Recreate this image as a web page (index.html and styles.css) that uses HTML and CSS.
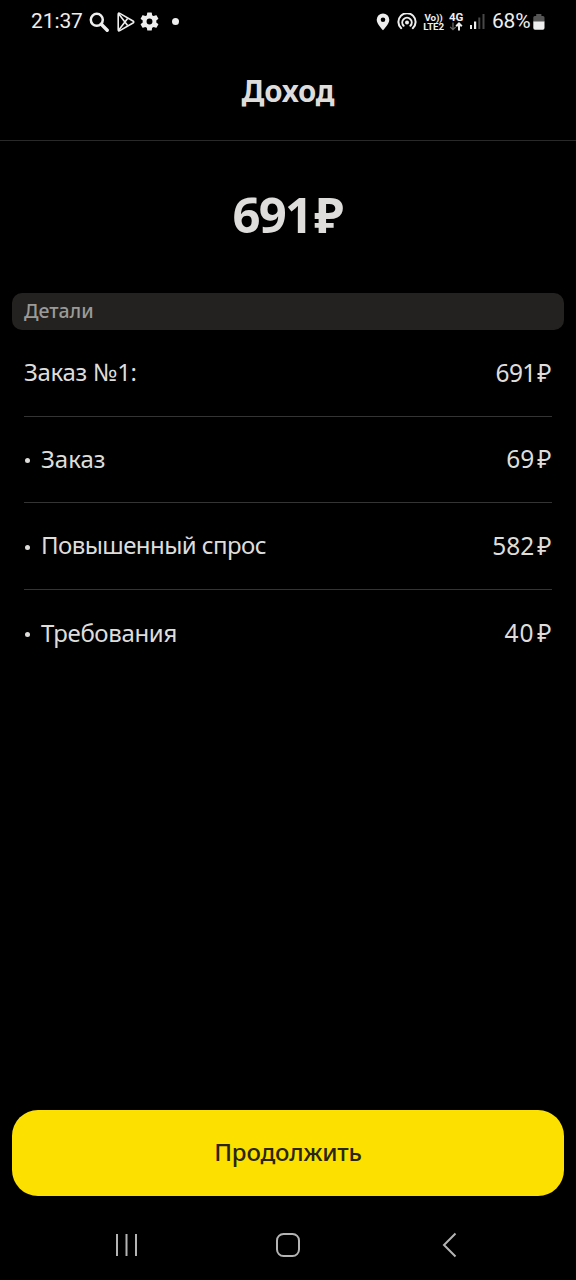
FILE: index.html
```html
<!DOCTYPE html>
<html lang="ru">
<head>
<meta charset="utf-8">
<title>Доход</title>
<link rel="stylesheet" href="styles.css">
</head>
<body>
<div class="screen">
  <div class="status">
    <span class="clock">21:37</span>
    <svg class="ic-search" width="20" height="20" viewBox="0 0 20 20"><circle cx="7.8" cy="7.8" r="6" fill="none" stroke="#eee" stroke-width="2.5"/><path d="M12.3 12.3L18.2 18.2" stroke="#eee" stroke-width="3.4" stroke-linecap="round"/></svg>
    <svg class="ic-play" width="18" height="20" viewBox="0 0 18 20" fill="none" stroke="#eee" stroke-width="1.6" stroke-linejoin="round"><path d="M1.2 2.4Q1.2 .6 2.8 1.4L16 9Q17.5 10 16 11L2.8 18.6Q1.2 19.4 1.2 17.6Z"/><path d="M1.8 2L10.6 13.600M1.8 18L10.6 6.400"/></svg>
    <svg class="ic-gear" width="19" height="19" viewBox="2.4 2 19.2 20"><path fill="#eee" d="M19.14 12.94c.04-.3.06-.61.06-.94s-.02-.64-.07-.94l2.03-1.58a.49.49 0 0 0 .12-.61l-1.92-3.32a.49.49 0 0 0-.59-.22l-2.39.96a7 7 0 0 0-1.62-.94l-.36-2.54a.48.48 0 0 0-.48-.41h-3.84a.48.48 0 0 0-.47.41l-.36 2.54c-.59.24-1.13.57-1.62.94l-2.39-.96a.48.48 0 0 0-.59.22L2.74 8.87a.48.48 0 0 0 .12.61l2.03 1.58a6 6 0 0 0-.02 1.88l-2.03 1.58a.49.49 0 0 0-.12.61l1.92 3.32c.12.22.37.29.59.22l2.39-.96c.5.38 1.03.7 1.62.94l.36 2.54c.05.24.24.41.48.41h3.84c.24 0 .44-.17.47-.41l.36-2.54c.59-.24 1.13-.56 1.62-.94l2.39.96c.22.08.47 0 .59-.22l1.92-3.32a.48.48 0 0 0-.12-.61zM12 15.1a3.1 3.1 0 1 1 0-6.2 3.1 3.1 0 0 1 0 6.2z"/></svg>
    <span class="dot"></span>
    <svg class="ic-pin" width="14" height="18" viewBox="0 0 14 18"><path fill="#eee" fill-rule="evenodd" d="M7 .5a6.3 6.3 0 0 0-6.3 6.3C.7 11 7 17.3 7 17.3s6.3-6.3 6.3-10.5A6.3 6.3 0 0 0 7 .5zM7 4.4a2.3 2.3 0 1 1 0 4.6 2.3 2.3 0 0 1 0-4.6z"/></svg>
    <svg class="ic-hotspot" width="20" height="18" viewBox="0 0 20 18" fill="none" stroke="#eee" stroke-width="2" stroke-linecap="round"><path d="M4.2 15.2A8.6 8.6 0 1 1 15.8 15.200M6.600 12.700A4.700 4.700 0 1 1 13.400 12.700"/><circle cx="10" cy="9.500" r="2" fill="#eee" stroke="none"/></svg>
    <span class="volte"><span>Vo))</span><span>LTE2</span></span>
    <span class="net"><span>4G</span><svg width="14" height="9" viewBox="0 0 14 9" fill="none" stroke-width="1.3"><path stroke="#666" d="M4 .5V7.600M1.200 4.900L4 7.700L6.800 4.900"/><path stroke="#eee" stroke-width="2" d="M10 8.500V1.500M7.200 4.300L10 1.500L12.800 4.300"/></svg></span>
    <svg class="ic-signal" width="16" height="17" viewBox="0 0 16 17"><path fill="#eee" d="M0 12h2v4H0zM4 8.500h2.200V16H4z"/><path fill="#484848" d="M8.300 4.500h2V16h-2zM12.500 1h2v15h-2z"/></svg>
    <span class="percent">68%</span>
    <svg class="ic-battery" width="12" height="18" viewBox="0 0 12 18"><path fill="#555" d="M3.200 1h5.200v2h1.600q1.500 0 1.500 1.500V9H.3V4.500Q.3 3 1.800 3h1.400z"/><path fill="#eee" d="M.3 8.500h11.200V15q0 1.700-1.700 1.700H2Q.3 16.700.3 15z"/></svg>
  </div>
  <header class="header"><h1 class="title">Доход</h1></header>
  <main class="content">
    <div class="total"><span class="total-num">691</span><span>₽</span></div>
    <div class="section">Детали</div>
    <div class="list">
      <div class="row"><span class="order">Заказ №1:</span><span class="sum tight">691<i>₽</i></span></div>
      <div class="row"><span class="item">Заказ</span><span class="sum">69<i>₽</i></span></div>
      <div class="row"><span class="item demand">Повышенный спрос</span><span class="sum">582<i>₽</i></span></div>
      <div class="row"><span class="item extras">Требования</span><span class="sum wide">40<i>₽</i></span></div>
    </div>
  </main>
  <button class="continue">Продолжить</button>
  <nav class="nav">
    <svg width="26" height="26" viewBox="0 0 26 26"><path d="M3 2v22M12.500 2v22M22 2v22" stroke="#b4b4b4" stroke-width="2"/></svg>
    <svg width="26" height="26" viewBox="0 0 26 26"><rect x="2" y="2" width="22" height="22" rx="6.500" fill="none" stroke="#b4b4b4" stroke-width="2"/></svg>
    <svg width="26" height="26" viewBox="0 0 26 26"><path d="M18.500 1.500L7 13L18.500 24.500" fill="none" stroke="#b4b4b4" stroke-width="2"/></svg>
  </nav>
</div>
</body>
</html>
```
FILE: styles.css
```css
* { box-sizing: border-box; }
body { margin: 0; background: #000; color: #dedddb; font-family: "Noto Sans", sans-serif; }
svg { display: block; flex: none; }
.screen { width: 576px; height: 1280px; display: flex; flex-direction: column; background: #000; overflow: hidden; }
.status { height: 43px; flex: none; display: flex; align-items: center; padding: 0 30px 0 31px; color: #eee; font-family: Roboto, sans-serif; white-space: nowrap; }
.clock { width: 52px; font-size: 21px; letter-spacing: -.1px; padding-bottom: 1px; }
.ic-search { margin-left: 6px; }
.ic-play { margin-left: 8px; }
.ic-gear { margin-left: 5px; }
.dot { width: 7px; height: 7px; border-radius: 50%; background: #eee; margin-left: 13px; }
.ic-pin { margin-left: auto; }
.ic-hotspot { margin-left: 7px; }
.volte { display: flex; flex-direction: column; align-items: center; width: 23px; margin-left: 5px; font-size: 9.8px; line-height: 9px; font-weight: 700; letter-spacing: -.2px; }
.net { display: flex; flex-direction: column; align-items: center; width: 14px; margin-left: 4px; font-size: 11.5px; line-height: 9px; font-weight: 700; letter-spacing: -.3px; }
.ic-signal { margin-left: 7px; }
.percent { width: 39px; margin-left: 6px; font-size: 21px; letter-spacing: -.2px; padding-bottom: 1px; }
.ic-battery { margin-left: 2px; margin-right: 1px; }
.header { height: 98px; flex: none; display: flex; align-items: center; justify-content: center; padding-bottom: 1px; border-bottom: 1px solid #292929; }
.title { margin: 0; font-size: 29.5px; line-height: 40px; font-weight: 700; letter-spacing: -.2px; }
.content { flex: 1; padding: 0 12px; }
.total { height: 152px; padding-top: 41px; display: flex; justify-content: center; gap: 3px; font-size: 49px; line-height: 64px; font-weight: 700; }
.total-num { letter-spacing: -1.8px; }
.section { height: 37px; padding: 0 12px; border-radius: 10px; background: #232220; color: #9b9a96; font-size: 19.5px; line-height: 36px; font-weight: 500; }
.list { padding: 0 12.5px 0 12px; }
.row { height: 86.6px; display: flex; align-items: center; justify-content: space-between; padding-bottom: 1px; border-bottom: 1px solid #343434; font-size: 24px; line-height: 34px; }
.row:last-child { border-bottom: 0; }
.order { letter-spacing: -.3px; }
.item { display: flex; align-items: center; gap: 11px; }
.item::before { content: ""; width: 5px; height: 5px; margin: 4px 0 0 1px; border-radius: 50%; background: #dedddb; }
.demand { letter-spacing: -.57px; }
.extras { letter-spacing: -.35px; }
.sum { padding-top: 1px; font-size: 24.5px; }
.sum.tight { letter-spacing: -.6px; }
.sum.wide { letter-spacing: .8px; }
.sum i { margin-left: 3px; font-style: normal; letter-spacing: 0; }
.tight i { margin-left: 1.5px; }
.continue { height: 86px; flex: none; margin: 0 12px; padding: 0 0 2px; border: 0; border-radius: 26px; background: #fce000; color: #2b2612; font: 500 24px/34px "Noto Sans", sans-serif; letter-spacing: -.2px; }
.nav { height: 84px; flex: none; display: flex; align-items: center; justify-content: space-between; padding: 14px 113px 0 114px; }
.nav svg:nth-child(2) { margin-right: 2px; }
```
